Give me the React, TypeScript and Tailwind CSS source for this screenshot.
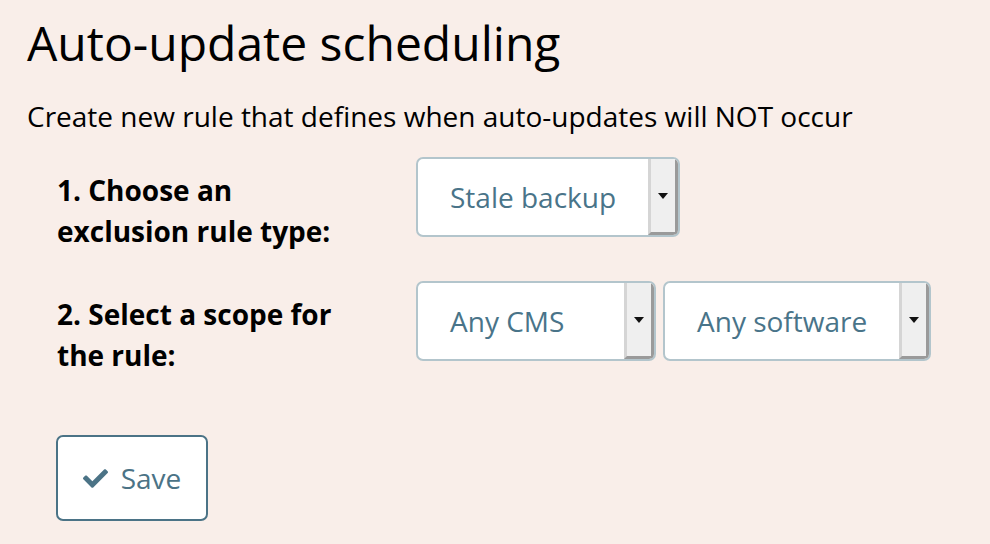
import React from 'react';
import { FaCheck } from 'react-icons/fa';

const font = { fontFamily: '"Open Sans", "Noto Sans", sans-serif' };

interface SelectBoxProps {
  value: string;
  width: string;
}

const SelectBox: React.FC<SelectBoxProps> = ({ value, width }) => {
  return (
    <div className={`${width} h-[80px] flex items-stretch bg-white border-2 border-[#b3c5cc] rounded-[7px] overflow-hidden`}>
      <div className="flex-1 flex items-center pl-[32px] text-[28px] text-[#497489]">{value}</div>
      <div className="w-[30px] flex items-center justify-center bg-[#efefef] border-l-[3px] border-l-[#d5d5d5] border-r-[3px] border-r-[#9a9a9a] border-b-[3px] border-b-[#9a9a9a]">
        <svg width="10" height="6" viewBox="0 0 10 6">
          <path d="M0 0 L10 0 L5 6 Z" fill="#111" />
        </svg>
      </div>
    </div>
  );
};

export default function App() {
  return (
    <div className="min-h-screen w-[990px] h-[544px] bg-[#f9eee9] text-black pl-[27px] pt-[12px]" style={font}>
      <h1 className="text-[48px] leading-[62px] font-normal">Auto-update scheduling</h1>
      <p className="mt-[24px] text-[28px] leading-[36px]">Create new rule that defines when auto-updates will NOT occur</p>

      <div className="mt-[23px] pl-[30px] flex flex-col gap-[28px]">
        <div className="flex items-start h-[96px]">
          <div className="w-[290px] mr-[69px] pt-[13px] text-[28px] leading-[41px] font-bold">1. Choose an exclusion rule type:</div>
          <SelectBox value="Stale backup" width="w-[264px]" />
        </div>
        <div className="flex items-start h-[96px]">
          <div className="w-[290px] mr-[69px] pt-[13px] text-[28px] leading-[41px] font-bold">2. Select a scope for the rule:</div>
          <div className="flex gap-[7px]">
            <SelectBox value="Any CMS" width="w-[240px]" />
            <SelectBox value="Any software" width="w-[268px]" />
          </div>
        </div>
      </div>

      <button className="mt-[58px] ml-[29px] w-[152px] h-[86px] flex items-center justify-center gap-[13px] bg-white border-2 border-[#4b7386] rounded-[7px] text-[28px] text-[#4b7386]">
        <FaCheck className="w-[25px] h-[25px]" />
        <span>Save</span>
      </button>
    </div>
  );
}
